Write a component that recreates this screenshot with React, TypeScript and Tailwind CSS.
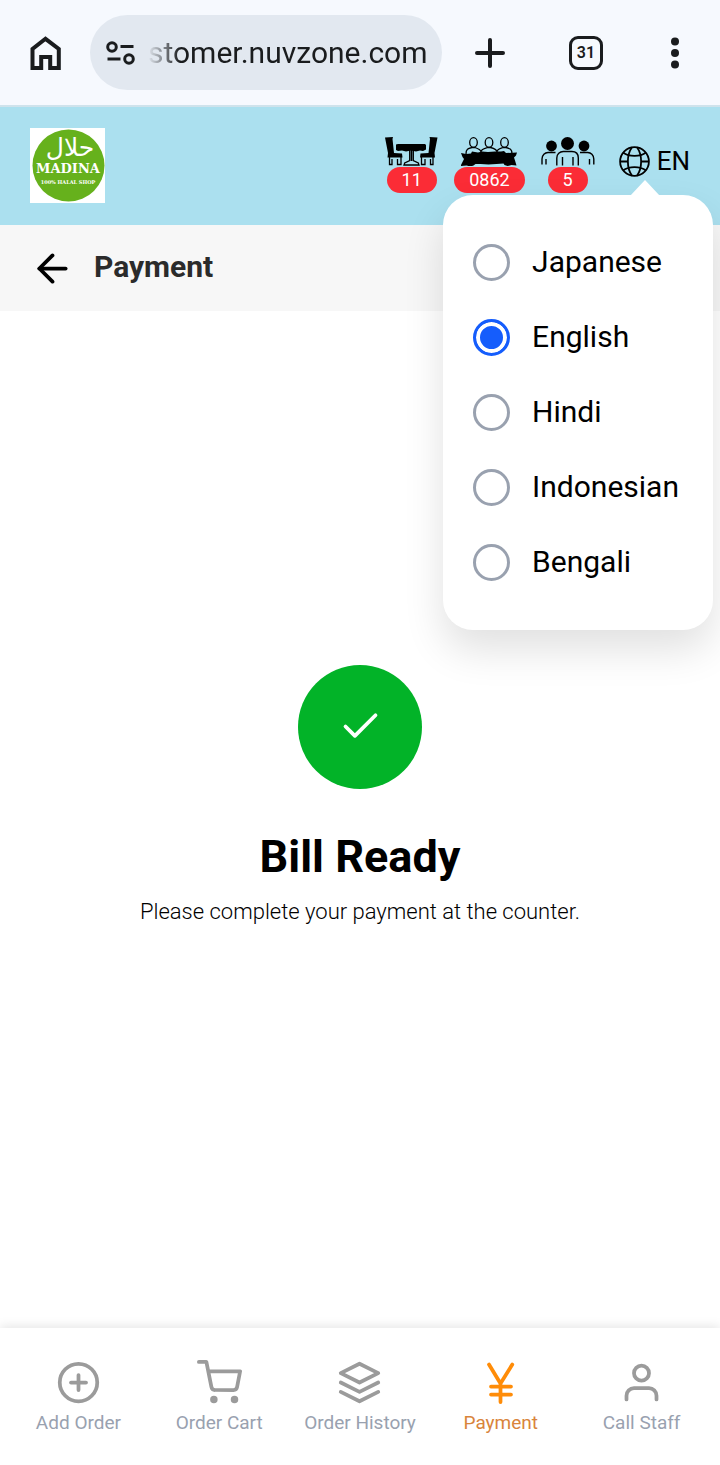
import React, { useState } from 'react';
import { FiArrowLeft, FiCheck, FiLayers, FiPlusCircle, FiShoppingCart, FiUser } from 'react-icons/fi';

const languages = ['Japanese', 'English', 'Hindi', 'Indonesian', 'Bengali'];

const HomeIcon = () => (
  <svg width="31" height="36" viewBox="0 0 31 36" fill="none" stroke="currentColor" strokeWidth="4">
    <path d="M2.5 33V14L15.5 3.8 28.8 14v19h-8.6V22h-9v11z" />
  </svg>
);

const SiteSettingsIcon = () => (
  <svg width="30" height="26" viewBox="0 0 30 26" fill="none" stroke="currentColor" strokeWidth="3">
    <circle cx="6" cy="7" r="4.3" />
    <path d="M14.500 6.500h13M1.500 19h13" />
    <circle cx="23" cy="19" r="4.300" />
  </svg>
);

const PlusIcon = () => (
  <svg width="32" height="32" viewBox="0 0 32 32" stroke="currentColor" strokeWidth="4" strokeLinecap="round">
    <path d="M16 3v26M3 16h26" />
  </svg>
);

const DotsIcon = () => (
  <svg width="10" height="34" viewBox="0 0 10 34" fill="currentColor">
    <circle cx="5" cy="5.500" r="4" />
    <circle cx="5" cy="17" r="4" />
    <circle cx="5" cy="28.500" r="4" />
  </svg>
);

const Logo = () => (
  <svg className="size-[75px] bg-white" viewBox="0 0 75 75" role="img" aria-label="Madina halal shop">
    <circle cx="38.500" cy="37.500" r="36" fill="#66b11c" />
    <g fill="#fff" textAnchor="middle" fontWeight="bold">
      <text x="40" y="28" fontSize="25" fontWeight="normal" fontFamily="DejaVu Sans, sans-serif">حلال</text>
      <text x="38" y="45" fontSize="13" fontFamily="DejaVu Serif, serif">MADINA</text>
      <text x="38" y="56" fontSize="5" fontFamily="DejaVu Serif, serif">100% HALAL SHOP</text>
    </g>
  </svg>
);

const TableIcon = () => (
  <svg width="53" height="29" viewBox="0 0 53 29">
    <path d="M0 .5L8 0l-.5 2L9 16l8 .5.500 4H2.500L3 16z" />
    <path d="M52.500.5L44.500 0l.5 2L43.500 16l-8 .5-.5 4H50L49.500 16z" />
    <path d="M11 7.500l2-.5h27l1 1v4.500l-3 1.500-3-.5-4 1-5-1-5 1-4-1-4 .5-2-1z" />
    <g fill="none" stroke="#000" strokeWidth="1.300">
      <path d="M4.500 20v7.500H7V22M12.500 22v5.500H16V20M48 20v7.500h-2.500V22M40 22v5.500h-3.500V20" />
      <path d="M24.700 13v10.500l-5 2.500-.7 2h15l-.7-2-5-2.500V13" />
      <path d="M26.500 13v11" strokeWidth="1.800" />
    </g>
  </svg>
);

const MeetingIcon = () => (
  <svg width="56" height="29" viewBox="0 0 56 29">
    <g fill="none" stroke="#000" strokeWidth="1.300">
      <ellipse cx="12.500" cy="5.500" rx="3.800" ry="4.800" />
      <ellipse cx="28" cy="5.500" rx="3.800" ry="4.800" />
      <ellipse cx="43.500" cy="5.500" rx="3.800" ry="4.800" />
      <path d="M5 17c0-5 2-5.500 6-6.500h3c3 1 6 2 6 4.500 0-3 3-3.500 6.500-4.500h3c4 1 6.500 2 6.500 4.500 0-3 3-3.500 6-4.500h3c4 1 6 1.500 6 6.500" />
    </g>
    <path d="M0 16l5 1 5-.5 1-2 6 1 4-1 6 .5 7-.5 6 0 3-.5 2 2 11-.5-1 3-2 2 1 3 1.500 5-5-.5-4 1-3-1-1-1.500-7 .5-8 .5-8-.5-5 0-2 1.500-3 1-4-1-6 .5 2-4 1.500-3-1.500-2z" />
  </svg>
);

const GuestsIcon = () => (
  <svg width="54" height="29" viewBox="0 0 54 29">
    <circle cx="10.500" cy="9" r="5.400" />
    <circle cx="26.500" cy="6.500" r="6.500" />
    <circle cx="43" cy="9" r="5.400" />
    <g fill="none" stroke="#000" strokeWidth="1.400">
      <path d="M1 27.500V22c0-4 3-6.500 6-6.500h7.500M52.800 27.500V22c0-4-3-6.500-6-6.500H39" />
      <path d="M15.800 28.500V21c0-4 3-6.500 6.500-6.500h8.500c4 0 6.500 2.500 6.500 6.500v7.500" />
      <path d="M5 22v5.500M48.500 22v5.500M21.500 20v8.500M32 20v8.500" />
    </g>
  </svg>
);

const GlobeIcon = () => (
  <svg width="31" height="31" viewBox="0 0 31 31" fill="none" stroke="currentColor" strokeWidth="1.800">
    <circle cx="15.500" cy="15.500" r="14.400" />
    <path d="M13 1.300C7.500 9 7.500 22 13 29.700M18 1.300C23.500 9 23.500 22 18 29.700" />
    <path d="M4 6.500C10 11 21 11 27 6.500M4 24.500C10 20 21 20 27 24.500M1 15.500h8M22 15.500h8" />
  </svg>
);

const YenIcon = () => (
  <svg width="45" height="45" viewBox="0 0 45 45" fill="none" stroke="#ff8c08" strokeWidth="3.750" strokeLinecap="round" strokeLinejoin="round">
    <path d="M11 4.500l11.500 19L34.300 4.500M22.500 23.500v18.500M13 26.500h20M13 34.500h20" />
  </svg>
);

const stats = [
  { label: 'Table', value: '11', icon: <TableIcon /> },
  { label: 'Order', value: '0862', icon: <MeetingIcon /> },
  { label: 'Guests', value: '5', icon: <GuestsIcon /> },
];

const navItems = [
  { label: 'Add Order', icon: <FiPlusCircle size={45} /> },
  { label: 'Order Cart', icon: <FiShoppingCart size={45} /> },
  { label: 'Order History', icon: <FiLayers size={45} /> },
  { label: 'Payment', icon: <YenIcon />, active: true },
  { label: 'Call Staff', icon: <FiUser size={45} /> },
];

const BrowserBar: React.FC = () => (
  <div className="flex h-[107px] items-center border-b-2 border-[#cfe3ec] bg-[#f6f9fe] text-[#1a1c1e]">
    <button aria-label="Home" className="flex w-[90px] justify-center">
      <HomeIcon />
    </button>
    <div className="flex h-[75px] min-w-0 flex-1 items-center gap-3 rounded-full bg-[#e2e8f0] pr-3 pl-4">
      <button aria-label="Site settings" className="shrink-0">
        <SiteSettingsIcon />
      </button>
      <input
        type="text"
        aria-label="Address"
        defaultValue="stomer.nuvzone.com"
        className="w-full min-w-0 flex-1 bg-transparent text-[30px] outline-none [mask-image:linear-gradient(to_right,transparent,black_32px)]"
      />
    </div>
    <button aria-label="New tab" className="flex w-24 justify-center">
      <PlusIcon />
    </button>
    <button aria-label="Tabs" className="flex w-24 justify-center">
      <span className="flex size-[34px] items-center justify-center rounded-[9px] border-[3px] border-current text-[16px] font-semibold">31</span>
    </button>
    <button aria-label="More" className="flex w-[86px] justify-center pr-1">
      <DotsIcon />
    </button>
  </div>
);

const LanguageMenu: React.FC<{ value: string; onChange: (language: string) => void }> = ({ value, onChange }) => (
  <div className="absolute top-[88px] right-[7px] z-10 rounded-[30px] bg-white py-[30px] pr-[34px] pl-[30px] shadow-[0_20px_40px_rgba(0,0,0,0.12)]">
    <div className="absolute -top-[15px] right-[53px] h-4 w-[30px] bg-white [clip-path:polygon(50%_0,100%_100%,0_100%)]" />
    {languages.map((language) => (
      <label key={language} className="flex h-[75px] items-center gap-[22px] text-[30px]">
        <input
          type="radio"
          name="language"
          checked={value === language}
          onChange={() => onChange(language)}
          className="size-[37px] shrink-0 appearance-none rounded-full border-[3px] border-[#99a1af] checked:border-[#155dfc] checked:bg-[#155dfc] checked:shadow-[inset_0_0_0_4px_#fff]"
        />
        <span className="pb-0.5">{language}</span>
      </label>
    ))}
  </div>
);

const App: React.FC = () => {
  const [language, setLanguage] = useState('English');
  const [menuOpen, setMenuOpen] = useState(true);

  return (
    <div className="flex min-h-screen flex-col bg-white font-[Roboto,sans-serif] text-black">
      <BrowserBar />

      <header className="relative flex h-[118px] items-center justify-between bg-[#abe0ef] px-[30px] pb-0.5">
        <Logo />
        <div className="flex items-center gap-4">
          {stats.map((stat) => (
            <div key={stat.label} className="flex flex-col items-center gap-px">
              {stat.icon}
              <span aria-label={stat.label} className="rounded-full bg-[#fb2c36] px-[15px] text-[18px] leading-[26px] text-white">
                {stat.value}
              </span>
            </div>
          ))}
          <button onClick={() => setMenuOpen(!menuOpen)} className="mb-2 ml-2 flex items-center gap-[7px] text-[26px]">
            <GlobeIcon />
            EN
          </button>
        </div>
        {menuOpen && <LanguageMenu value={language} onChange={setLanguage} />}
      </header>

      <div className="flex h-[86px] items-center gap-[19px] bg-[#f7f7f7] px-[30px]">
        <button aria-label="Back">
          <FiArrowLeft size={45} />
        </button>
        <h1 className="pb-1 text-[30px] font-bold text-[#2b2b2b]">Payment</h1>
      </div>

      <main className="flex flex-1 flex-col items-center justify-center px-4 pb-[46px] text-center">
        <div className="flex size-[124px] items-center justify-center rounded-full bg-[#02b328] text-white">
          <FiCheck size={45} />
        </div>
        <h2 className="mt-[34px] text-[45px] leading-[68px] font-bold">Bill Ready</h2>
        <p className="mt-1 text-[22px] leading-[34px] font-light">Please complete your payment at the counter.</p>
      </main>

      <nav className="flex h-[137px] bg-white px-2 pt-8 shadow-[0_-2px_10px_rgba(0,0,0,0.1)]">
        {navItems.map((item) => (
          <a key={item.label} href="#" className="flex flex-1 flex-col items-center gap-1 text-[#9b9b9b]">
            {item.icon}
            <span className={item.active ? 'text-[19px] text-[#d9843b]' : 'text-[19px] text-[#99a1af]'}>{item.label}</span>
          </a>
        ))}
      </nav>
    </div>
  );
};

export default App;
